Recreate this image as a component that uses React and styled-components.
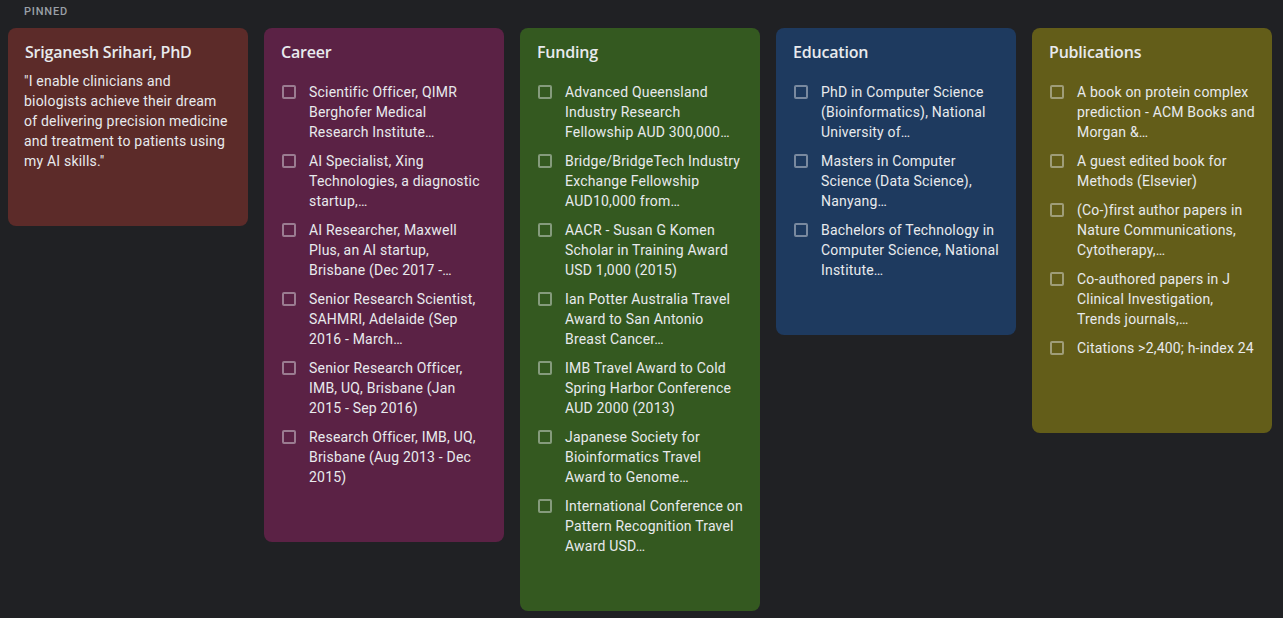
import React from 'react';
import styled, { createGlobalStyle } from 'styled-components';

const GlobalStyle = createGlobalStyle`
  html, body {
    margin: 0;
    padding: 0;
    background-color: #202124;
  }
  body {
    font-family: Roboto, Arial, sans-serif;
    color: #e8eaed;
  }
`;

const Page = styled.div`
  width: 1283px;
  height: 618px;
  background-color: #202124;
  overflow: hidden;
`;

const SectionLabel = styled.div`
  padding: 4px 0 0 24px;
  height: 28px;
  box-sizing: border-box;
  font-family: Roboto, Arial, sans-serif;
  font-size: 11px;
  line-height: 16px;
  font-weight: 500;
  letter-spacing: 0.8px;
  color: #9aa0a6;
`;

const Grid = styled.div`
  display: flex;
  align-items: flex-start;
  gap: 16px;
  padding: 0 8px;
`;

const Card = styled.div`
  width: 240px;
  box-sizing: border-box;
  border-radius: 8px;
  background-color: ${(p) => p.$color};
  padding: 12px 16px ${(p) => p.$bottom || 51}px 16px;
  flex-shrink: 0;
`;

const Title = styled.div`
  font-family: "Open Sans", Roboto, Arial, sans-serif;
  font-size: 16px;
  line-height: 24px;
  font-weight: 600;
  letter-spacing: -0.2px;
  color: #e8eaed;
  padding-left: 1px;
`;

const Body = styled.div`
  margin-top: 7px;
  margin-bottom: 4px;
  font-size: 14px;
  line-height: 20px;
  color: #e8eaed;
  letter-spacing: 0.2px;
`;

const Line = styled.span`
  display: block;
  white-space: nowrap;
`;

const List = styled.ul`
  list-style: none;
  margin: 13px 0 0 0;
  padding: 0;
`;

const Item = styled.li`
  display: flex;
  align-items: flex-start;
  gap: 13px;
  padding: 5px 0 4px 2px;
`;

const Check = styled.span`
  flex: 0 0 auto;
  width: 14px;
  height: 14px;
  box-sizing: border-box;
  margin-top: 3px;
  border: 2px solid rgba(232, 234, 237, 0.45);
  border-radius: 2px;
`;

const ItemText = styled.span`
  flex: 1;
  font-size: 14px;
  line-height: 20px;
  color: #e8eaed;
  letter-spacing: 0.2px;
`;

const notes = [
  {
    title: 'Career',
    color: '#5b2245',
    items: [
      ['Scientific Officer, QIMR', 'Berghofer Medical', 'Research Institute…'],
      ['AI Specialist, Xing', 'Technologies, a diagnostic', 'startup,…'],
      ['AI Researcher, Maxwell', 'Plus, an AI startup,', 'Brisbane (Dec 2017 -…'],
      ['Senior Research Scientist,', 'SAHMRI, Adelaide (Sep', '2016 - March…'],
      ['Senior Research Officer,', 'IMB, UQ, Brisbane (Jan', '2015 - Sep 2016)'],
      ['Research Officer, IMB, UQ,', 'Brisbane (Aug 2013 - Dec', '2015)'],
    ],
  },
  {
    title: 'Funding',
    color: '#345920',
    items: [
      ['Advanced Queensland', 'Industry Research', 'Fellowship AUD 300,000…'],
      ['Bridge/BridgeTech Industry', 'Exchange Fellowship', 'AUD10,000 from…'],
      ['AACR - Susan G Komen', 'Scholar in Training Award', 'USD 1,000 (2015)'],
      ['Ian Potter Australia Travel', 'Award to San Antonio', 'Breast Cancer…'],
      ['IMB Travel Award to Cold', 'Spring Harbor Conference', 'AUD 2000 (2013)'],
      ['Japanese Society for', 'Bioinformatics Travel', 'Award to Genome…'],
      ['International Conference on', 'Pattern Recognition Travel', 'Award USD…'],
    ],
  },
  {
    title: 'Education',
    color: '#1e3a5f',
    items: [
      ['PhD in Computer Science', '(Bioinformatics), National', 'University of…'],
      ['Masters in Computer', 'Science (Data Science),', 'Nanyang…'],
      ['Bachelors of Technology in', 'Computer Science, National', 'Institute…'],
    ],
  },
  {
    title: 'Publications',
    color: '#635d19',
    bottom: 71,
    items: [
      ['A book on protein complex', 'prediction - ACM Books and', 'Morgan &…'],
      ['A guest edited book for', 'Methods (Elsevier)'],
      ['(Co-)first author papers in', 'Nature Communications,', 'Cytotherapy,…'],
      ['Co-authored papers in J', 'Clinical Investigation,', 'Trends journals,…'],
      ['Citations >2,400; h-index 24'],
    ],
  },
];

const quote = [
  '"I enable clinicians and',
  'biologists achieve their dream',
  'of delivering precision medicine',
  'and treatment to patients using',
  'my AI skills."',
];

const ChecklistNote = ({ note }) => (
  <Card $color={note.color} $bottom={note.bottom}>
    <Title>{note.title}</Title>
    <List>
      {note.items.map((lines) => (
        <Item key={lines.join(' ')}>
          <Check />
          <ItemText>
            {lines.map((l) => (
              <Line key={l}>{l}</Line>
            ))}
          </ItemText>
        </Item>
      ))}
    </List>
  </Card>
);

const App = () => (
  <Page>
    <GlobalStyle />
    <SectionLabel>PINNED</SectionLabel>
    <Grid>
      <Card $color="#5c2b29">
        <Title>Sriganesh Srihari, PhD</Title>
        <Body>
          {quote.map((l) => (
            <Line key={l}>{l}</Line>
          ))}
        </Body>
      </Card>
      {notes.map((note) => (
        <ChecklistNote key={note.title} note={note} />
      ))}
    </Grid>
  </Page>
);

export default App;
